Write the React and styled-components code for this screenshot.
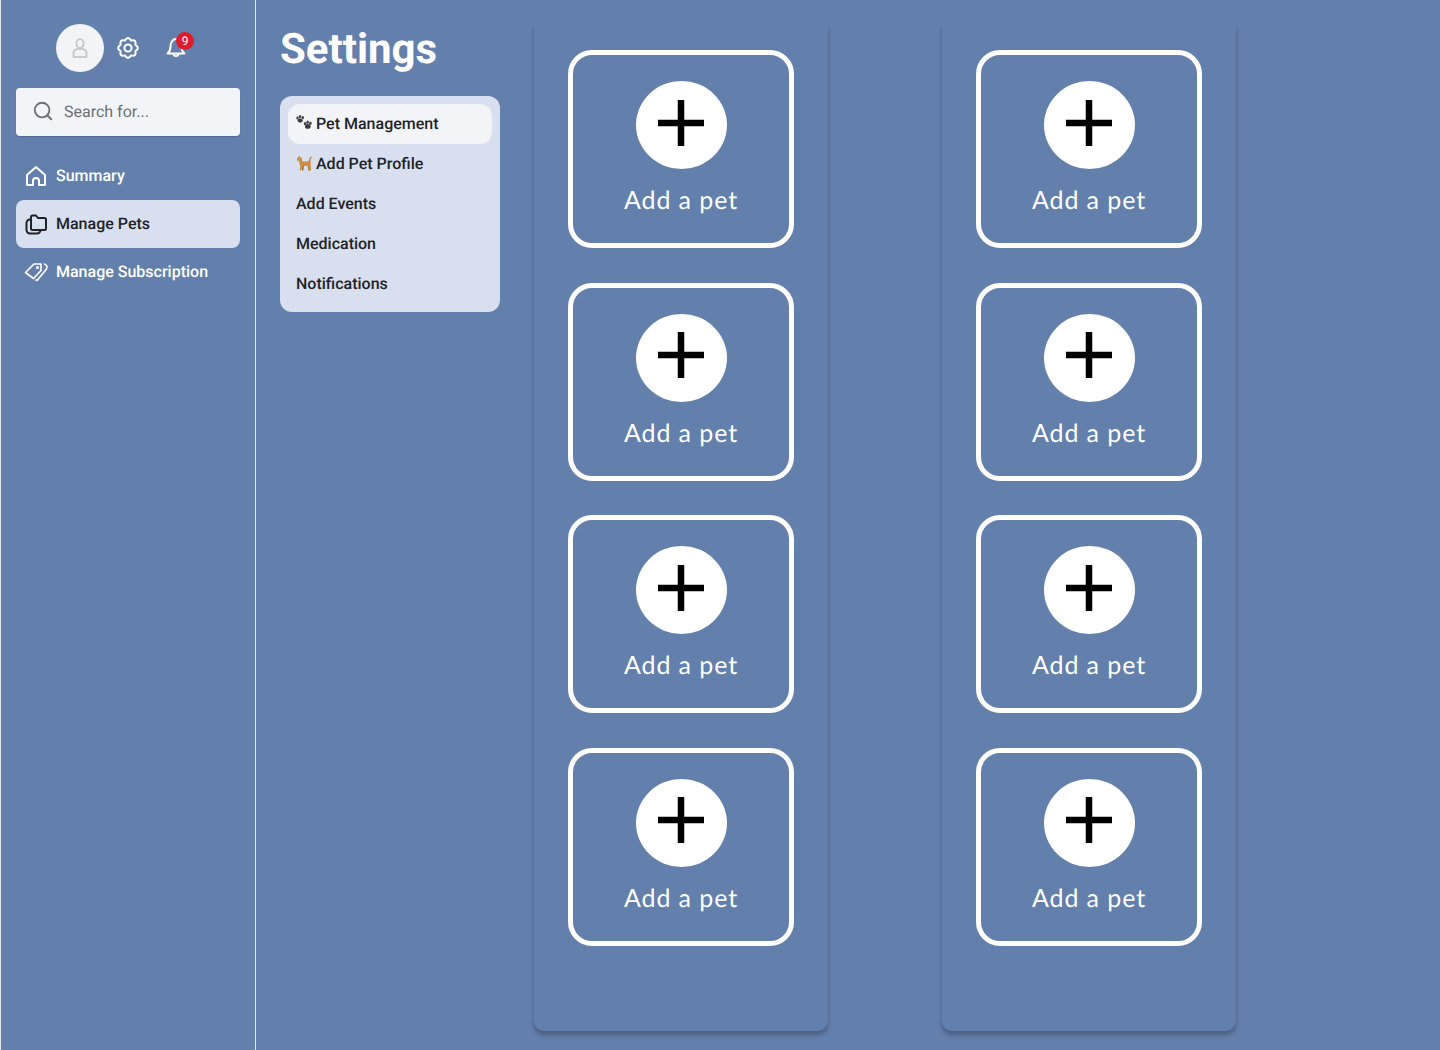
import React from 'react';
import styled, { createGlobalStyle } from 'styled-components';
import { Search } from 'lucide-react';

const Global = createGlobalStyle`
  html, body { margin: 0; padding: 0; background: #637fac; }
  body {
    font-family: Roboto, "Liberation Sans", sans-serif;
    text-rendering: geometricPrecision;
  }
  * { box-sizing: border-box; }
`;

const Page = styled.div`
  display: flex;
  width: 1440px;
  height: 1050px;
  overflow: hidden;
  background: #637fac;
`;

const Sidebar = styled.aside`
  width: 256px;
  flex: none;
  padding: 24px 15px 0;
  border-left: 1px solid #dfe6f2;
  border-right: 1px solid #dfe6f2;
`;

const TopIcons = styled.div`
  display: flex;
  align-items: center;
  height: 48px;
  padding-left: 40px;
`;

const Avatar = styled.div`
  width: 48px;
  height: 48px;
  border-radius: 50%;
  background: #f3f4f8;
  display: flex;
  align-items: center;
  justify-content: center;
`;

const IconButton = styled.div`
  position: relative;
  width: 24px;
  height: 24px;
  margin-left: ${p => p.$ml}px;
  color: #fff;
`;

const Badge = styled.span`
  position: absolute;
  top: -4px;
  left: 12px;
  width: 18px;
  height: 18px;
  border-radius: 50%;
  background: #e01b2c;
  color: #fff;
  font-size: 12px;
  line-height: 18px;
  text-align: center;
`;

const SearchBox = styled.div`
  display: flex;
  align-items: center;
  gap: 10px;
  height: 48px;
  margin-top: 16px;
  padding: 0 0 2px 16px;
  background: #f3f4f8;
  border-radius: 4px;
  box-shadow: 0 1px 1px rgba(30, 45, 80, 0.25);
  color: #6a7075;
  font-size: 16px;
`;

const Nav = styled.nav`
  display: flex;
  flex-direction: column;
  margin-top: 16px;
`;

const NavItem = styled.div`
  display: flex;
  align-items: center;
  gap: 8px;
  height: 48px;
  padding-left: 8px;
  border-radius: 8px;
  font-size: 16px;
  font-weight: 500;
  color: ${p => (p.$active ? '#1f2328' : '#fff')};
  background: ${p => (p.$active ? '#d8e0f0' : 'transparent')};
`;

const NavLabel = styled.span`
  padding-bottom: 2px;
`;

const SettingsColumn = styled.section`
  width: 244px;
  flex: none;
  padding-left: 24px;
`;

const Title = styled.h1`
  margin: 23px 0 0;
  font-size: 42px;
  line-height: 54px;
  font-weight: 700;
  color: #fff;
`;

const Menu = styled.div`
  width: 220px;
  margin-top: 19px;
  padding: 8px;
  border-radius: 12px;
  background: #d8e0f0;
`;

const MenuItem = styled.div`
  display: flex;
  align-items: center;
  gap: 4px;
  height: 40px;
  padding: 0 0 2px 8px;
  border-radius: 12px;
  font-size: 16px;
  font-weight: 500;
  color: #1f2328;
  background: ${p => (p.$active ? '#f3f4f8' : 'transparent')};
`;

const Panels = styled.main`
  display: flex;
  gap: 114px;
  margin-left: 34px;
  padding-top: 24px;
`;

const Panel = styled.div`
  width: 294px;
  height: 1007px;
  padding: 26px 34px 0;
  display: flex;
  flex-direction: column;
  gap: 34.5px;
  border-radius: 0 0 10px 10px;
  box-shadow: 0 4px 4px rgba(0, 0, 0, 0.25);
`;

const AddCard = styled.div`
  width: 226px;
  height: 198px;
  flex: none;
  padding-top: 26px;
  border: 5px solid #fff;
  border-radius: 24px;
  display: flex;
  flex-direction: column;
  align-items: center;
`;

const Circle = styled.div`
  width: 91px;
  height: 88px;
  flex: none;
  padding-bottom: 5px;
  border-radius: 50%;
  background: #fff;
  display: flex;
  align-items: center;
  justify-content: center;
`;

const AddLabel = styled.div`
  margin-top: 15px;
  font-family: Lato, sans-serif;
  font-size: 25px;
  font-weight: 400;
  line-height: 32px;
  letter-spacing: 0.9px;
  color: #fff;
`;

const PlusIcon = () => (
  <svg width="46" height="46" viewBox="0 0 46 46">
    <path d="M23 0v46M0 23h46" stroke="#000" strokeWidth="6.5" fill="none" />
  </svg>
);

const UserIcon = () => (
  <svg width="24" height="24" viewBox="0 0 24 24" fill="none" stroke="#c6cacf" strokeWidth="2">
    <ellipse cx="12" cy="7.5" rx="3.6" ry="4.4" />
    <path d="M5.5 21v-3.5a4.5 4.5 0 0 1 4.5-4.5h4a4.5 4.5 0 0 1 4.5 4.5V21z" strokeLinejoin="round" />
  </svg>
);

// scalloped ring, eight soft lobes round the centre
const gearPath = () => {
  const lobes = 8;
  let d = '';
  for (let i = 0; i < lobes; i++) {
    const a0 = ((i + 0.5) / lobes) * Math.PI * 2;
    const a1 = ((i + 1) / lobes) * Math.PI * 2;
    const a2 = ((i + 1.5) / lobes) * Math.PI * 2;
    const pt = (a, r) => `${(12 + Math.cos(a) * r).toFixed(2)} ${(12 + Math.sin(a) * r).toFixed(2)}`;
    if (i === 0) d += `M${pt(a0, 8)}`;
    d += `Q${pt(a1, 12.4)} ${pt(a2, 8)}`;
  }
  return d + 'Z';
};

const GearIcon = () => (
  <svg width="24" height="24" viewBox="0 0 24 24" fill="none" stroke="currentColor" strokeWidth="2">
    <path d={gearPath()} strokeLinejoin="round" />
    <circle cx="12" cy="12" r="3.6" />
  </svg>
);

const BellIcon = () => (
  <svg width="24" height="24" viewBox="0 0 24 24" fill="none" stroke="currentColor" strokeWidth="2" strokeLinejoin="round">
    <path d="M3.5 17.5C5.5 16 6.5 14 6.5 10.5 6.5 6 9 3 12 3s5.5 3 5.5 7.5c0 3.5 1 5.5 3 7z" />
    <path d="M9.5 17.5a2.5 2.5 0 0 0 5 0" />
  </svg>
);

const HomeIcon = () => (
  <svg width="24" height="24" viewBox="0 0 24 24" fill="none" stroke="currentColor" strokeWidth="2" strokeLinejoin="round">
    <path d="M3 21V11l9-8 9 8v10h-6v-4a3 3 0 0 0-6 0v4z" />
  </svg>
);

const FoldersIcon = () => (
  <svg width="24" height="24" viewBox="0 0 24 24" fill="none" stroke="currentColor" strokeWidth="2" strokeLinejoin="round" strokeLinecap="round">
    <path d="M7 8V5a1.5 1.5 0 0 1 1.5-1.5h3.5l2 2.5h6.5A1.5 1.5 0 0 1 22 7.5v9a1.5 1.5 0 0 1-1.5 1.5h-12A1.5 1.5 0 0 1 7 16.5z" />
    <path d="M7 7.5H6A3.5 3.5 0 0 0 2.5 11v7A3.5 3.5 0 0 0 6 21.5h7a3.5 3.5 0 0 0 3.5-3.5" />
  </svg>
);

const TagsIcon = () => (
  <svg width="24" height="24" viewBox="0 0 24 24" fill="none" stroke="currentColor" strokeWidth="1.6" strokeLinejoin="round">
    <path d="M1.5 12.5 10 4h7v6.5L9.5 18.5z" />
    <path d="M20 3.5 23 6l-.5 3L13 20.5l-1.5-1" />
    <circle cx="13.5" cy="7.5" r="0.8" />
  </svg>
);

const PawIcon = () => (
  <svg width="16" height="16" viewBox="0 0 16 16" fill="#3b3b3e">
    <ellipse cx="1.5" cy="3" rx="1.2" ry="1.6" />
    <ellipse cx="4" cy="1.6" rx="1.2" ry="1.6" />
    <ellipse cx="6.8" cy="2.6" rx="1.2" ry="1.6" />
    <ellipse cx="4.2" cy="5.6" rx="2.6" ry="2.1" />
    <ellipse cx="9" cy="8.6" rx="1.2" ry="1.6" />
    <ellipse cx="11.6" cy="7.2" rx="1.2" ry="1.6" />
    <ellipse cx="14.4" cy="8.2" rx="1.2" ry="1.6" />
    <ellipse cx="11.8" cy="11.4" rx="2.8" ry="2.3" />
  </svg>
);

const DogIcon = () => (
  <svg width="16" height="16" viewBox="0 0 16 16">
    <path d="M11.5 10 12.5 15.5H14L13.8 9.5zM6.5 10 5.8 15.5H7.2L8 10.5z" fill="#9a6428" />
    <path d="M1 3.5 3 .8 4.2 2 5.8 3 6.3 6.3 11 6.6 13 5.8 13.4 3 15.5 1.2 15.9 2.8 14.7 4V8.5L15 15.5H13.5L12 10.8 7 11 5 15.5H3.6L4.4 11 3.5 9 3 6 .8 5.4z" fill="#cd8e45" />
  </svg>
);

const Slot = () => (
  <AddCard>
    <Circle><PlusIcon /></Circle>
    <AddLabel>Add a pet</AddLabel>
  </AddCard>
);

export default function App() {
  const slots = [0, 1, 2, 3];
  return (
    <Page>
      <Global />
      <Sidebar>
        <TopIcons>
          <Avatar><UserIcon /></Avatar>
          <IconButton $ml={12}><GearIcon /></IconButton>
          <IconButton $ml={24}>
            <BellIcon />
            <Badge>9</Badge>
          </IconButton>
        </TopIcons>
        <SearchBox>
          <Search size={22} strokeWidth={2} />
          Search for...
        </SearchBox>
        <Nav>
          <NavItem><HomeIcon /><NavLabel>Summary</NavLabel></NavItem>
          <NavItem $active><FoldersIcon /><NavLabel>Manage Pets</NavLabel></NavItem>
          <NavItem><TagsIcon /><NavLabel>Manage Subscription</NavLabel></NavItem>
        </Nav>
      </Sidebar>
      <SettingsColumn>
        <Title>Settings</Title>
        <Menu>
          <MenuItem $active><PawIcon />Pet Management</MenuItem>
          <MenuItem><DogIcon />Add Pet Profile</MenuItem>
          <MenuItem>Add Events</MenuItem>
          <MenuItem>Medication</MenuItem>
          <MenuItem>Notifications</MenuItem>
        </Menu>
      </SettingsColumn>
      <Panels>
        <Panel>{slots.map(i => <Slot key={i} />)}</Panel>
        <Panel>{slots.map(i => <Slot key={i} />)}</Panel>
      </Panels>
    </Page>
  );
}
